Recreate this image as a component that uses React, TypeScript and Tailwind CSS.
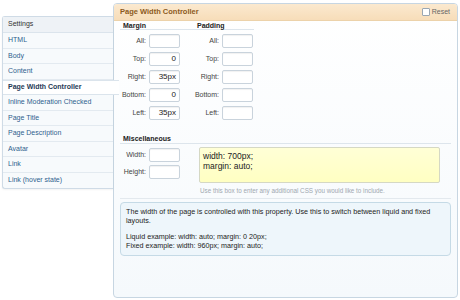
import React from "react";

const font = { fontFamily: '"Liberation Sans", Arial, sans-serif' };

const items = [
  "HTML",
  "Body",
  "Content",
  "Page Width Controller",
  "Inline Moderation Checked",
  "Page Title",
  "Page Description",
  "Avatar",
  "Link",
  "Link (hover state)",
];

function Field({ label, value, lw }: { label: string; value?: string; lw: string }) {
  return (
    <div className="flex items-center h-[14px]">
      <div className={`${lw} text-right pr-[3px] text-[7px] text-[#444]`}>{label}</div>
      <div className="w-[31px] h-[14px] bg-white border border-[#c9d3dc] rounded-[2px] shadow-[inset_0_1px_1px_rgba(0,0,0,0.06)] text-right pr-[3px] text-[8px] leading-[12px] text-[#222]">
        {value}
      </div>
    </div>
  );
}

export default function App() {
  return (
    <div className="w-[460px] h-[300px] bg-white flex overflow-hidden" style={font}>
      <div className="mt-[16px] ml-[2px] w-[111px] shrink-0 relative z-10">
        <div className="border border-r-0 border-[#cfdbe6] rounded-l-[3px] bg-[#f7fafc] shadow-[0_1px_2px_rgba(0,0,0,0.05)]">
          <div className="h-[16px] flex items-center pl-[5px] text-[7px] text-[#333] bg-[#eef2f6] border-b border-[#dbe4ec]">
            Settings
          </div>
          {items.map((it, i) => {
            const sel = it === "Page Width Controller";
            return (
              <div
                key={it}
                className={
                  sel
                    ? "h-[15.5px] flex items-center pl-[5px] text-[7px] font-bold text-[#1f3a56] bg-white mr-[-6px] border-y border-[#dbe4ec]"
                    : `h-[15.5px] flex items-center pl-[5px] text-[7px] text-[#2f5f8e] ${i < items.length - 1 ? "border-b border-[#e3eaf0]" : ""}`
                }
              >
                {it}
              </div>
            );
          })}
        </div>
      </div>
      <div className="mt-[3px] w-[345px] h-[295px] shrink-0 border border-[#c7d6e2] rounded-[4px] bg-gradient-to-b from-[#ffffff] to-[#f5f9fc] overflow-hidden">
        <div className="h-[17px] flex items-center justify-between px-[6px] bg-gradient-to-b from-[#fbe9cf] to-[#f7ddb9] border-b border-[#ecd2aa]">
          <span className="text-[7.5px] font-bold text-[#8c5a1c]">Page Width Controller</span>
          <span className="flex items-center gap-[2px] text-[7px] text-[#666] mr-[1px]">
            <span className="w-[8px] h-[8px] bg-white border border-[#9aa7b3] rounded-[1px]" />
            Reset
          </span>
        </div>
        <div className="pl-[6px] pr-[6px]">
          <div className="flex w-[134px] border-b border-[#dde5ec] h-[9px] mt-[0px]">
            <div className="w-[77px] pl-[3px] text-[7px] font-bold text-[#222] leading-[9px]">Margin</div>
            <div className="text-[7px] font-bold text-[#222] leading-[9px]">Padding</div>
          </div>
          <div className="flex mt-[4px]">
            <div className="flex flex-col gap-[4px]">
              <Field label="All:" lw="w-[29px]" />
              <Field label="Top:" value="0" lw="w-[29px]" />
              <Field label="Right:" value="35px" lw="w-[29px]" />
              <Field label="Bottom:" value="0" lw="w-[29px]" />
              <Field label="Left:" value="35px" lw="w-[29px]" />
            </div>
            <div className="flex flex-col gap-[4px] ml-[12px]">
              <Field label="All:" lw="w-[30px]" />
              <Field label="Top:" lw="w-[30px]" />
              <Field label="Right:" lw="w-[30px]" />
              <Field label="Bottom:" lw="w-[30px]" />
              <Field label="Left:" lw="w-[30px]" />
            </div>
          </div>
          <div className="mt-[15px] border-b border-[#dde5ec] h-[9px] pl-[3px] text-[7px] font-bold text-[#222] leading-[8px] w-[331px]">
            Miscellaneous
          </div>
          <div className="flex mt-[3px]">
            <div className="flex flex-col gap-[3px] mt-[1px]">
              <Field label="Width:" lw="w-[29px]" />
              <Field label="Height:" lw="w-[29px]" />
            </div>
            <div className="ml-[19px] flex flex-col">
              <div className="w-[241px] h-[36px] border border-[#d5d8c4] rounded-[2px] bg-gradient-to-b from-[#ffffd6] to-[#ffffc2] px-[3px] pt-[3px] text-[8.5px] leading-[10px] text-[#222]">
                <div>width: 700px;</div>
                <div>margin: auto;</div>
              </div>
              <div className="text-[6.3px] text-[#a0a8b0] mt-[3px] pl-[1px]">
                Use this box to enter any additional CSS you would like to include.
              </div>
            </div>
          </div>
          <div className="mt-[3px] border-t border-[#e3e9ee] pt-[3px] w-[331px]">
            <div className="border border-[#c5dae6] rounded-[4px] bg-[#eef6fb] px-[5px] pt-[4px] pb-[5px] text-[7.2px] leading-[9px] text-[#222]">
              <div>The width of the page is controlled with this property. Use this to switch between liquid and fixed layouts.</div>
              <div className="mt-[7px]">Liquid example: width: auto; margin: 0 20px;</div>
              <div>Fixed example: width: 960px; margin: auto;</div>
            </div>
          </div>
        </div>
      </div>
    </div>
  );
}
